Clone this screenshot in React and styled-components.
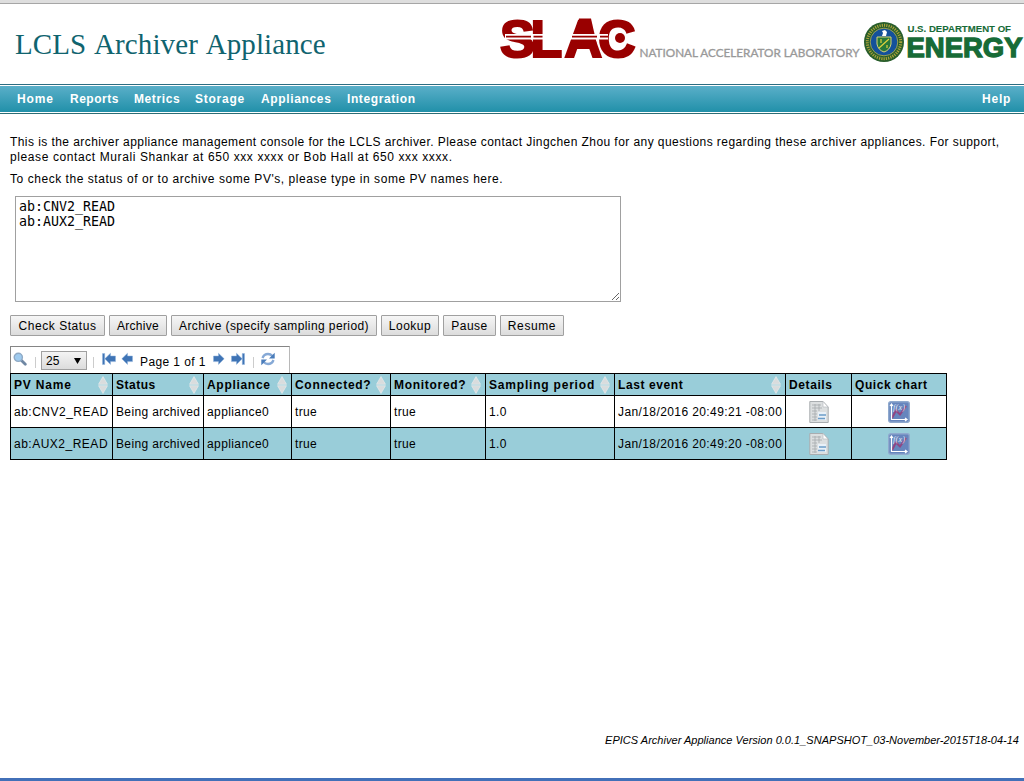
import React from "react";
import styled, { createGlobalStyle } from "styled-components";

const sans = '"Liberation Sans", Arial, sans-serif';

const GlobalStyle = createGlobalStyle`
  * { box-sizing: border-box; }
  html, body { margin: 0; background: #fff; }
  body { font: 12px/15px ${sans}; color: #000; overflow: hidden; }
`;

const Page = styled.div`
  width: 1024px;
  height: 781px;
  display: flex;
  flex-direction: column;
  background: #fff;
  border-top: 3px solid #dedede;
`;

const Header = styled.header`
  height: 81px;
  border-top: 1px solid #a6a6a6;
  display: flex;
  justify-content: space-between;
  align-items: flex-start;
`;

const Title = styled.h1`
  margin: 23px 0 0 15px;
  font: 400 29px/34px "Liberation Serif", "Times New Roman", serif;
  letter-spacing: 0.1px;
  word-spacing: 2px;
  color: #10646f;
  white-space: nowrap;
`;

const Nav = styled.nav`
  height: 30px;
  flex: none;
  border-top: 1px solid #2c6d82;
  border-bottom: 1px solid #2c6d75;
  padding: 1px 0;
  display: flex;
  background: linear-gradient(#5aafc9, #2190a9) content-box;
`;

const NavItem = styled.a`
  width: ${(p) => p.$w}px;
  margin-left: ${(p) => (p.$end ? "auto" : 0)};
  font: bold 12px/26px ${sans};
  letter-spacing: ${(p) => p.$ls}px;
  color: #fff;
  white-space: nowrap;
  &:first-child { margin-left: 17px; }
`;

const Main = styled.main`
  flex: 1;
  padding: 21px 10px 0;
  display: flex;
  flex-direction: column;
  align-items: flex-start;
`;

const Paragraph = styled.p`
  margin: 0 0 7px;
  white-space: nowrap;
`;

const Line = styled.span`
  display: block;
  height: 15px;
  letter-spacing: ${(p) => p.$ls}px;
`;

const NamesBox = styled.textarea`
  width: 606px;
  height: 106px;
  margin: 2px 5px 13px;
  padding: 2px 3px;
  border: 1px solid #a0a0a0;
  font: 13.3px/15px "DejaVu Sans Mono", monospace;
  color: #000;
  resize: both;
  outline: none;
`;

const Buttons = styled.div`
  display: flex;
  gap: 4px;
  margin-bottom: 10px;
`;

const Button = styled.button`
  width: ${(p) => p.$w}px;
  height: 21px;
  padding: 0;
  border: 1px solid #a0a0a0;
  border-radius: 1px;
  background: linear-gradient(#f6f6f6, #dcdcdc);
  font: 12px/18px ${sans};
  letter-spacing: ${(p) => p.$ls}px;
  color: #000;
  white-space: nowrap;
`;

const Pager = styled.div`
  width: 280px;
  height: 27px;
  display: flex;
  align-items: flex-start;
  border: 1px solid #858585;
  border-right-color: #b8b8b8;
  border-bottom: 0;
`;

const PagerIcon = styled.svg`
  width: 14px;
  height: 14px;
  margin: 5px 0 0 ${(p) => p.$gap}px;
  flex: none;
`;

const Separator = styled.span`
  width: 1px;
  height: 11px;
  margin: 10px 0 0 ${(p) => p.$gap}px;
  background: #ccc;
`;

const PageSize = styled.button`
  width: 46px;
  height: 19px;
  margin: 4px 0 0 5px;
  padding: 1px 5px 0 4px;
  display: flex;
  align-items: center;
  justify-content: space-between;
  border: 1px solid #a0a0a0;
  background: linear-gradient(#f4f4f4, #dcdcdc);
  font: 12px/17px ${sans};
  color: #000;
`;

const PageLabel = styled.span`
  width: 67px;
  margin: 8px 0 0 6px;
  letter-spacing: 0.4px;
  white-space: nowrap;
`;

const Table = styled.table`
  width: 937px;
  table-layout: fixed;
  border-collapse: collapse;
`;

const Th = styled.th`
  height: 22px;
  padding: 0 3px;
  border: 1px solid #000;
  background: #99cdd9;
  text-align: left;
  font: bold 12px/15px ${sans};
  letter-spacing: ${(p) => p.$ls}px;
  white-space: nowrap;
`;

const HeadCell = styled.div`
  display: flex;
  justify-content: space-between;
  align-items: center;
`;

const HeadLabel = styled.span`
  padding-top: 2px;
`;

const SortArrows = styled.svg`
  width: 10px;
  height: 18px;
  margin: 0 1px 0 -4px;
  flex: none;
`;

const Row = styled.tr`
  height: 32px;
  background: ${(p) => (p.$shaded ? "#99cdd9" : "#fff")};
`;

const Td = styled.td`
  padding: ${(p) => (p.$icon ? 0 : "2px 3px 0")};
  border: 1px solid #000;
  letter-spacing: ${(p) => p.$ls || 0.35}px;
  white-space: nowrap;
`;

const CellIcon = styled.svg`
  display: block;
  margin: 0 auto;
`;

const Footer = styled.footer`
  height: 49px;
  flex: none;
  padding-right: 5px;
  border-bottom: 3px solid #4270b8;
  text-align: right;
  font: italic 11px/16px ${sans};
  letter-spacing: 0.02px;
`;

const Logos = () => (
  <svg width="524" height="56" viewBox="500 4 524 56" style={{ overflow: "visible" }}>
    <g fill="#990000">
      <text x="500 530.6 564.5 598" y="56.8" stroke="#990000" strokeWidth="2.2" fontFamily="Liberation Sans" fontWeight="bold" fontSize="52">SLAC</text>
      <path d="M579 18.4H591L597 45H571Z" />
      <path d="M505 34H608V39.4H505Z" fill="#fff" />
      <path d="M506 35.8H531V37.5H506ZM533.5 35.8H542.5V37.5H533.5ZM572 35.8H597V37.5H572ZM600 35.8H608V37.5H600Z" />
      <circle cx="620" cy="38" r="5" />
    </g>
    <text x="639.5" y="57" textLength="220" lengthAdjust="spacingAndGlyphs" fontFamily="Lato" fontSize="11" fill="#999" stroke="#999" strokeWidth=".3">NATIONAL ACCELERATOR LABORATORY</text>
    <circle cx="884" cy="42" r="20" fill="#285d2b" />
    <circle cx="884" cy="42" r="16.7" fill="none" stroke="#aaa33b" strokeWidth="3" strokeDasharray="1.2 1.1" />
    <circle cx="884" cy="42" r="13.8" fill="#14519b" stroke="#b9b44b" strokeWidth=".8" />
    <path d="M877 37H891V44Q890 50 884 52Q878 50 877 44Z" fill="#287839" stroke="#d8d477" />
    <path d="M879 48L889 39M881 39V43M887 45V48" stroke="#dfd13c" strokeWidth="1.2" />
    <path d="M882 31L885 30L887 32L886 36H882L883 33Z" fill="#fff" />
    <g fill="#176b37" stroke="#176b37" fontFamily="Liberation Sans" fontWeight="bold">
      <text x="907.5" y="32" textLength="103.5" lengthAdjust="spacingAndGlyphs" fontSize="8.6" strokeWidth=".1">U.S. DEPARTMENT OF</text>
      <text x="906.5" y="57" textLength="116" lengthAdjust="spacingAndGlyphs" fontSize="27.5" strokeWidth="1.3">ENERGY</text>
    </g>
  </svg>
);

const ArrowIcon = ({ gap, right, bar }) => (
  <PagerIcon $gap={gap} viewBox="0 0 14 14">
    <g transform={right ? "translate(14 0) scale(-1 1)" : undefined} fill="#3f74b5" stroke="#8fb2dc" strokeWidth=".5">
      {bar && <path d="M.5 1.5H2.7V12.5H.5Z" />}
      <path transform={bar ? "translate(2 0)" : "translate(1 0)"} d="M.8 6.8L6.5 1.2V4H11.5V9.6H6.5V12.4Z" />
    </g>
  </PagerIcon>
);

const Sort = () => (
  <SortArrows viewBox="0 0 10 18">
    <path d="M5 0.5L9.5 8.3H.5ZM.5 9.7H9.5L5 17.5Z" fill="#d9dcdd" stroke="#eceeee" strokeWidth=".6" />
  </SortArrows>
);

const DetailsIcon = () => (
  <CellIcon width="20" height="24" viewBox="0 0 20 24">
    <path d="M.8 1.5H14L19.2 7V22.5H.8Z" fill="#dcdfe0" stroke="#a9adb0" />
    <path d="M14 1.5V7H19Z" fill="#fff" stroke="#b8bcc0" strokeWidth=".7" />
    <path d="M3 5H12M3 8H13M3 11H8M3 14H8M3 17H8M3 20H8M6 4V21M10 4V11" stroke="#a9afb1" strokeWidth=".9" />
    <path d="M9 12H17V20H9Z" fill="#e9f1f8" />
    <path d="M10 15H17M9 18.5H16" stroke="#6c9dc8" strokeWidth="1.4" />
  </CellIcon>
);

const ChartIcon = () => (
  <CellIcon width="22" height="22" viewBox="0 0 22 22">
    <rect x=".7" y=".7" width="20.6" height="20.6" rx="2" fill="#6685bd" stroke="#8fa9ce" strokeWidth="1.4" />
    <path d="M4 17L8 9.5L12 13.5L18 5" stroke="#8f4683" fill="none" strokeWidth="2" />
    <path d="M3.5 3V18.5H19M2 5L3.5 3L5 5M17 17L19 18.5L17 20" stroke="#fff" fill="none" strokeWidth="1.2" />
    <text x="5" y="8.8" fontFamily="Liberation Serif" fontStyle="italic" fontSize="8" fill="#e4ebf7">f(x)</text>
  </CellIcon>
);

const columns = [
  ["PV Name", 102, 0.8, true],
  ["Status", 91, 0.5, true],
  ["Appliance", 88, 0.7, true],
  ["Connected?", 99, 0.7, true],
  ["Monitored?", 95, 0.7, true],
  ["Sampling period", 129, 0.8, true],
  ["Last event", 171, 0.6, true],
  ["Details", 66, 0.6, false],
  ["Quick chart", 95, 0.6, false],
];

const rows = [
  ["ab:CNV2_READ", "Jan/18/2016 20:49:21 -08:00"],
  ["ab:AUX2_READ", "Jan/18/2016 20:49:20 -08:00"],
];

export default function App() {
  return (
    <Page>
      <GlobalStyle />
      <Header>
        <Title>LCLS Archiver Appliance</Title>
        <Logos />
      </Header>
      <Nav>
        <NavItem $w={53} $ls={0.9}>Home</NavItem>
        <NavItem $w={64} $ls={0.5}>Reports</NavItem>
        <NavItem $w={61} $ls={0.6}>Metrics</NavItem>
        <NavItem $w={66} $ls={0.75}>Storage</NavItem>
        <NavItem $w={86} $ls={0.65}>Appliances</NavItem>
        <NavItem $w={90} $ls={0.6}>Integration</NavItem>
        <NavItem $w={42} $ls={0.8} $end>Help</NavItem>
      </Nav>
      <Main>
        <Paragraph>
          <Line $ls={0.432}>This is the archiver appliance management console for the LCLS archiver. Please contact Jingchen Zhou for any questions regarding these archiver appliances. For support,</Line>
          <Line $ls={0.6}>please contact Murali Shankar at 650 xxx xxxx or Bob Hall at 650 xxx xxxx.</Line>
        </Paragraph>
        <Paragraph>
          <Line $ls={0.545}>To check the status of or to archive some PV's, please type in some PV names here.</Line>
        </Paragraph>
        <NamesBox spellCheck={false} defaultValue={"ab:CNV2_READ\nab:AUX2_READ"} />
        <Buttons>
          <Button $w={95} $ls={0.55}>Check Status</Button>
          <Button $w={58} $ls={0.3}>Archive</Button>
          <Button $w={206} $ls={0.4}>Archive (specify sampling period)</Button>
          <Button $w={58} $ls={0.5}>Lookup</Button>
          <Button $w={53} $ls={0.5}>Pause</Button>
          <Button $w={64} $ls={0.6}>Resume</Button>
        </Buttons>
        <Pager>
          <PagerIcon $gap={2} viewBox="0 0 14 14">
            <path d="M8 8L12.3 12.3" stroke="#6f87a3" strokeWidth="2.8" strokeLinecap="round" />
            <circle cx="5.3" cy="5.3" r="4.1" fill="#9fcbef" stroke="#8fa9c4" strokeWidth="1.4" />
          </PagerIcon>
          <Separator $gap={8} />
          <PageSize>25<svg width="7" height="6" viewBox="0 0 7 6"><path d="M0 0H7L3.5 6Z" /></svg></PageSize>
          <Separator $gap={6} />
          <ArrowIcon gap={8} bar />
          <ArrowIcon gap={4} />
          <PageLabel>Page 1 of 1</PageLabel>
          <ArrowIcon gap={5} right />
          <ArrowIcon gap={5} right bar />
          <Separator $gap={8} />
          <PagerIcon $gap={7} viewBox="0 0 14 14">
            <path d="M1.5 6Q3 2 7 2Q9.5 2 11.5 4M12.5 8Q11 12 7 12Q4.5 12 2.5 10" fill="none" stroke="#86a9d6" strokeWidth="2.4" />
            <path d="M13.7 .8V6.5H8ZM.3 13.2V7.5H6Z" fill="#4a7cba" />
          </PagerIcon>
        </Pager>
        <Table>
          <colgroup>{columns.map(([name, w]) => <col key={name} width={w} />)}</colgroup>
          <thead>
            <tr>
              {columns.map(([name, , ls, sortable]) => (
                <Th key={name} $ls={ls}><HeadCell><HeadLabel>{name}</HeadLabel>{sortable && <Sort />}</HeadCell></Th>
              ))}
            </tr>
          </thead>
          <tbody>
            {rows.map(([pv, time], i) => (
              <Row key={pv} $shaded={i % 2 === 1}>
                <Td $ls={0.5}>{pv}</Td>
                <Td>Being archived</Td>
                <Td $ls={0.4}>appliance0</Td>
                <Td>true</Td>
                <Td>true</Td>
                <Td>1.0</Td>
                <Td $ls={0.4}>{time}</Td>
                <Td $icon><DetailsIcon /></Td>
                <Td $icon><ChartIcon /></Td>
              </Row>
            ))}
          </tbody>
        </Table>
      </Main>
      <Footer>EPICS Archiver Appliance Version 0.0.1_SNAPSHOT_03-November-2015T18-04-14</Footer>
    </Page>
  );
}
